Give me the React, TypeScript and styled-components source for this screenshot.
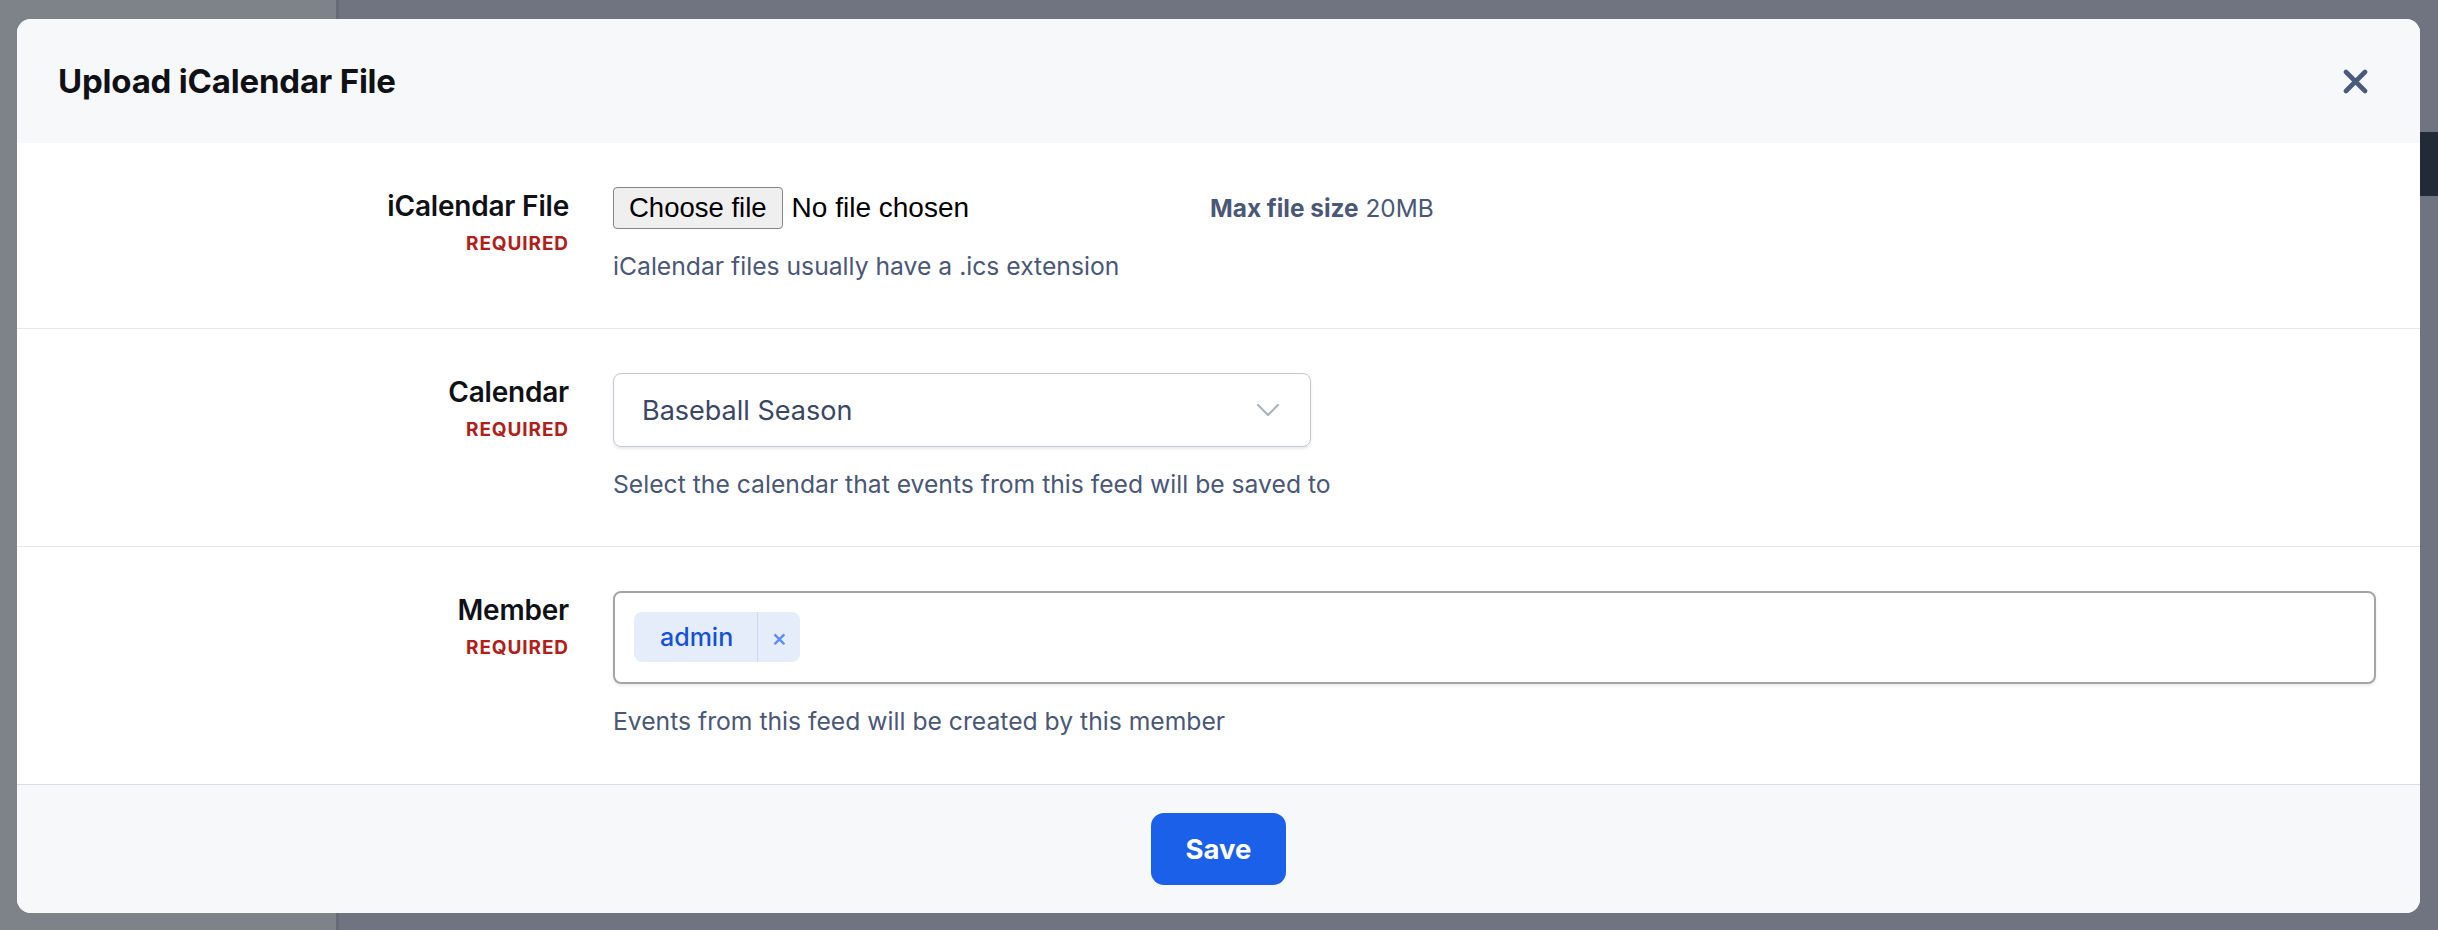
import styled, { createGlobalStyle } from "styled-components";

const GlobalStyle = createGlobalStyle`
  html, body {
    margin: 0;
    padding: 0;
  }
  body {
    font-family: Inter, "Noto Sans", "Liberation Sans", sans-serif;
    -webkit-font-smoothing: antialiased;
  }
  * {
    box-sizing: border-box;
  }
`;

const colors = {
  ink: "#0f1117",
  slate: "#4a5776",
  required: "#b0201b",
  rule: "#e6e6e6",
  headerBg: "#f7f8fa",
  blue: "#1b60e8",
};

const Page = styled.div`
  position: relative;
  width: 2438px;
  height: 930px;
  display: flex;
  overflow: hidden;
  background: #6f7480;
`;

const SideBehind = styled.div`
  width: 339px;
  background: #7e8289;
  border-right: 3px solid #656a74;
`;

const MainBehind = styled.div`
  flex: 1;
  display: flex;
  justify-content: flex-end;
  align-items: flex-start;
  padding-top: 132px;
`;

const DarkBlock = styled.div`
  width: 60px;
  height: 64px;
  background: #222a38;
  border-radius: 8px 0 0 8px;
`;

const Overlay = styled.div`
  position: absolute;
  inset: 0;
  display: flex;
  padding: 19px 18px 17px 17px;
`;

const Modal = styled.div`
  flex: 1;
  display: flex;
  flex-direction: column;
  background: #fff;
  border-radius: 14px;
  overflow: hidden;
`;

const Header = styled.header`
  height: 124px;
  flex-shrink: 0;
  display: flex;
  align-items: center;
  justify-content: space-between;
  padding: 0 52px 0 41px;
  background: ${colors.headerBg};
`;

const Title = styled.h1`
  margin: 0;
  font-size: 33px;
  font-weight: 700;
  letter-spacing: -0.2px;
  color: ${colors.ink};
`;

const CloseButton = styled.button`
  width: 25px;
  height: 25px;
  padding: 0;
  border: 0;
  background: none;
  display: flex;
  cursor: pointer;
`;

const Body = styled.div`
  flex: 1;
  display: flex;
  flex-direction: column;
`;

const Row = styled.div`
  display: grid;
  grid-template-columns: 508px 1fr;
  column-gap: 44px;
  padding: 44px 44px 46px 44px;
  border-bottom: 1px solid ${colors.rule};

  &:last-child {
    border-bottom: 0;
  }
`;

const LabelCol = styled.div`
  display: flex;
  flex-direction: column;
  align-items: flex-end;
  text-align: right;
`;

const Label = styled.label`
  font-size: 28px;
  line-height: 39px;
  font-weight: 600;
  letter-spacing: -0.2px;
  color: ${colors.ink};
`;

const Required = styled.span`
  margin-top: 5px;
  font-size: 19px;
  line-height: 26px;
  font-weight: 700;
  letter-spacing: 0.9px;
  color: ${colors.required};
`;

const FieldCol = styled.div`
  display: flex;
  flex-direction: column;
  min-width: 0;
`;

const Hint = styled.p`
  margin: 22px 0 0;
  font-size: 24.7px;
  line-height: 31px;
  color: ${colors.slate};
`;

const FileLine = styled.div`
  height: 42px;
  display: flex;
  align-items: center;
`;

const FilePicker = styled.div`
  width: 597px;
  display: flex;
  align-items: center;
  gap: 9px;
  font-family: "Liberation Sans", Arial, sans-serif;
  font-size: 28px;
  color: #000;
`;

const FileButton = styled.button`
  height: 42px;
  padding: 0 15px;
  font-family: inherit;
  font-size: 27.5px;
  color: #000;
  background: #efefef;
  border: 1.5px solid #858585;
  border-radius: 4px;
`;

const MaxSize = styled.span`
  font-size: 24.4px;
  color: ${colors.slate};

  b {
    font-weight: 700;
  }
`;

const Select = styled.div`
  width: 698px;
  height: 74px;
  display: flex;
  align-items: center;
  justify-content: space-between;
  padding: 0 30px 0 28px;
  border: 1.5px solid #c4c8d2;
  border-radius: 8px;
  box-shadow: 0 2px 3px rgba(30, 40, 60, 0.1);
  font-size: 27px;
  color: #3a4663;
`;

const TagInput = styled.div`
  height: 93px;
  display: flex;
  align-items: flex-start;
  padding: 19px;
  border: 2px solid #a5a5a5;
  border-radius: 8px;
  box-shadow: 0 2px 3px rgba(0, 0, 0, 0.08);
`;

const Chip = styled.div`
  height: 50px;
  display: flex;
  align-items: stretch;
  background: #e5edfb;
  border-radius: 8px;
  font-size: 25px;
  font-weight: 500;
  color: #1552d6;
`;

const ChipText = styled.span`
  display: flex;
  align-items: center;
  padding: 0 24px 0 26px;
  border-right: 1px solid #cbd9f4;
`;

const ChipRemove = styled.span`
  width: 42px;
  display: flex;
  align-items: center;
  justify-content: center;
  font-size: 24px;
  color: #5a8ff0;
`;

const Footer = styled.footer`
  height: 129px;
  flex-shrink: 0;
  display: flex;
  align-items: center;
  justify-content: center;
  background: ${colors.headerBg};
  border-top: 1px solid #dadcea;
`;

const SaveButton = styled.button`
  width: 135px;
  height: 72px;
  border: 0;
  border-radius: 13px;
  background: ${colors.blue};
  color: #fff;
  font-family: inherit;
  font-size: 27.5px;
  font-weight: 700;
  cursor: pointer;
`;

function CloseIcon() {
  return (
    <svg width="25" height="25" viewBox="0 0 25 25" fill="none">
      <path
        d="M3 3L22 22M22 3L3 22"
        stroke="#4a5a7a"
        strokeWidth="4.6"
        strokeLinecap="round"
      />
    </svg>
  );
}

function Chevron() {
  return (
    <svg width="24" height="14" viewBox="0 0 24 14" fill="none">
      <path
        d="M2 2L12 12L22 2"
        stroke="#aeb3bf"
        strokeWidth="2.2"
        strokeLinecap="round"
        strokeLinejoin="round"
      />
    </svg>
  );
}

function FieldLabel({ children }: { children: string }) {
  return (
    <LabelCol>
      <Label>{children}</Label>
      <Required>REQUIRED</Required>
    </LabelCol>
  );
}

export default function App() {
  return (
    <>
      <GlobalStyle />
      <Page>
        <SideBehind />
        <MainBehind>
          <DarkBlock />
        </MainBehind>
        <Overlay>
          <Modal>
            <Header>
              <Title>Upload iCalendar File</Title>
              <CloseButton aria-label="Close">
                <CloseIcon />
              </CloseButton>
            </Header>
            <Body>
              <Row>
                <FieldLabel>iCalendar File</FieldLabel>
                <FieldCol>
                  <FileLine>
                    <FilePicker>
                      <FileButton>Choose file</FileButton>
                      <span>No file chosen</span>
                    </FilePicker>
                    <MaxSize>
                      <b>Max file size</b> 20MB
                    </MaxSize>
                  </FileLine>
                  <Hint>iCalendar files usually have a .ics extension</Hint>
                </FieldCol>
              </Row>
              <Row>
                <FieldLabel>Calendar</FieldLabel>
                <FieldCol>
                  <Select>
                    <span>Baseball Season</span>
                    <Chevron />
                  </Select>
                  <Hint>Select the calendar that events from this feed will be saved to</Hint>
                </FieldCol>
              </Row>
              <Row>
                <FieldLabel>Member</FieldLabel>
                <FieldCol>
                  <TagInput>
                    <Chip>
                      <ChipText>admin</ChipText>
                      <ChipRemove>×</ChipRemove>
                    </Chip>
                  </TagInput>
                  <Hint>Events from this feed will be created by this member</Hint>
                </FieldCol>
              </Row>
            </Body>
            <Footer>
              <SaveButton>Save</SaveButton>
            </Footer>
          </Modal>
        </Overlay>
      </Page>
    </>
  );
}
